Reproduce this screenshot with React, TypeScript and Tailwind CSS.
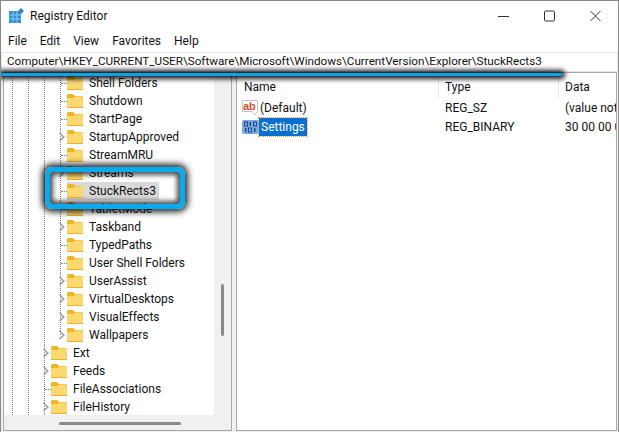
import React from "react";

const Folder = () => (
  <svg width="16" height="14" viewBox="0 0 16 14" className="shrink-0">
    <path d="M0 1.5 Q0 0 1.5 0 H6 L8 2 H16 V13 H0 Z" fill="#f0b429" />
    <path d="M0 4 H6.5 L8.5 2.6 H16 V13 Q16 14 15 14 H1 Q0 14 0 13 Z" fill="#fbd970" />
    <path d="M0 13.5 H16" stroke="#eeb02c" strokeWidth="1" />
  </svg>
);

const Chevron = () => (
  <svg width="8" height="10" viewBox="0 0 8 10" className="shrink-0">
    <path d="M1.5 1 L5.8 5 L1.5 9" fill="none" stroke="#a0a0a0" strokeWidth="1.6" />
  </svg>
);

type Row = { name: string; chevron?: boolean; deep: boolean; selected?: boolean };

const rows: Row[] = [
  { name: "Shell Folders", deep: true },
  { name: "Shutdown", deep: true },
  { name: "StartPage", deep: true },
  { name: "StartupApproved", chevron: true, deep: true },
  { name: "StreamMRU", deep: true },
  { name: "Streams", chevron: true, deep: true },
  { name: "StuckRects3", deep: true, selected: true },
  { name: "TabletMode", deep: true },
  { name: "Taskband", chevron: true, deep: true },
  { name: "TypedPaths", deep: true },
  { name: "User Shell Folders", deep: true },
  { name: "UserAssist", chevron: true, deep: true },
  { name: "VirtualDesktops", chevron: true, deep: true },
  { name: "VisualEffects", chevron: true, deep: true },
  { name: "Wallpapers", chevron: true, deep: true },
  { name: "Ext", chevron: true, deep: false },
  { name: "Feeds", chevron: true, deep: false },
  { name: "FileAssociations", deep: false },
  { name: "FileHistory", chevron: true, deep: false },
];

const Guide = ({ className }: { className: string }) => (
  <div className={`absolute top-0 w-px border-l border-dotted border-[#777] ${className}`} />
);

const TreeRow = ({ r }: { r: Row }) => (
  <div className={`flex h-[18px] items-center ${r.deep ? "pl-[54px]" : "pl-[38px]"}`}>
    <div className="flex h-[18px] w-[9px] items-center shrink-0">
      {r.chevron ? <Chevron /> : <div className="ml-[3px] w-[6px] border-t border-dotted border-[#777]" />}
    </div>
    <div className={`flex h-[18px] items-center pr-[3px] ${r.selected ? "bg-[#d9d9d9]" : ""}`}>
      <Folder />
      <span className="ml-[6px] text-[12px] leading-[18px] whitespace-nowrap text-[#111]">{r.name}</span>
    </div>
  </div>
);

const AbIcon = () => (
  <svg width="16" height="16" viewBox="0 0 16 16" className="shrink-0">
    <path d="M0.5 0.5 H15.5 V11.5 L13 15 L10 11.5 H0.5 Z" fill="#fff" stroke="#c4c4c4" />
    <text x="1" y="10" fontSize="11" fontWeight="700" fill="#d8502a" fontFamily="Liberation Sans, sans-serif">ab</text>
  </svg>
);

const BinIcon = () => (
  <svg width="17" height="16" viewBox="0 0 17 16" className="shrink-0">
    <rect x="0" y="1" width="17" height="14" rx="2" fill="#79a9de" />
    <rect x="2.5" y="3" width="3" height="4" fill="none" stroke="#1f4f8a" />
    <rect x="7.5" y="3" width="1.5" height="4" fill="#1f4f8a" />
    <rect x="11.5" y="3" width="3" height="4" fill="none" stroke="#1f4f8a" />
    <rect x="3" y="9" width="1.5" height="4" fill="#1f4f8a" />
    <rect x="6.5" y="9" width="3" height="4" fill="none" stroke="#1f4f8a" />
    <rect x="12" y="9" width="1.5" height="4" fill="#1f4f8a" />
  </svg>
);

export default function App() {
  return (
    <div
      className="relative flex h-[432px] w-[619px] flex-col overflow-hidden border-t border-l border-r border-[#8a8a8a] bg-white text-[#111]"
      style={{ fontFamily: 'Roboto, "Noto Sans", sans-serif' }}
    >
      {/* Title bar */}
      <div className="flex h-[29px] items-center pl-[8px]">
        <svg width="15" height="15" viewBox="0 0 15 15" className="shrink-0">
          <rect x="0" y="3" width="12" height="12" fill="#2f8fd6" />
          <path d="M4 3 V15 M8 3 V15 M0 7 H12 M0 11 H12" stroke="#9fd4f4" strokeWidth="0.8" />
          <path d="M12 0 L15 3 L12 6 L9 3 Z" fill="#2a86c8" />
        </svg>
        <span className="ml-[6px] text-[12px]">Registry Editor</span>
        <div className="ml-auto flex items-center gap-[35px] pr-[17px] text-[#222]">
          <svg width="11" height="12" viewBox="0 0 11 12"><path d="M0 6.5 H11" stroke="#333" /></svg>
          <svg width="11" height="12" viewBox="0 0 11 12"><rect x="0.5" y="1" width="10" height="10" rx="1" fill="none" stroke="#333" /></svg>
          <svg width="11" height="12" viewBox="0 0 11 12"><path d="M0.5 1 L10.5 11 M10.5 1 L0.5 11" stroke="#333" /></svg>
        </div>
      </div>
      {/* Menu */}
      <div className="flex h-[22px] items-center gap-[13px] pl-[7px] text-[12px]">
        <span>File</span>
        <span>Edit</span>
        <span>View</span>
        <span>Favorites</span>
        <span>Help</span>
      </div>
      {/* Address */}
      <div className="flex h-[20px] items-center border border-[#e6e6e6] pl-[5px] text-[11.7px]">
        <span className="whitespace-nowrap">Computer\HKEY_CURRENT_USER\Software\Microsoft\Windows\CurrentVersion\Explorer\StuckRects3</span>
      </div>
      {/* Panels */}
      <div className="flex min-h-0 flex-1 gap-[4px] bg-[#f0f0f0] pl-[2px] pr-[1px] pb-[1px]">
        <div className="relative flex w-[229px] flex-col overflow-hidden border border-[#a8a8a8] bg-white">
          <div className="flex min-h-0 flex-1">
            <div className="relative min-h-0 flex-1 overflow-hidden pt-[1px]">
              <Guide className="left-[8px] h-full" />
              <Guide className="left-[24px] h-full" />
              <Guide className="left-[40px] h-full" />
              <Guide className="left-[56px] h-[262px]" />
              <div className="relative">
                {rows.map((r) => <TreeRow key={r.name} r={r} />)}
              </div>
            </div>
            <div className="relative w-[17px] shrink-0 bg-[#f0f0f0]">
              <div className="absolute left-[7px] top-[211px] h-[52px] w-[3px] rounded bg-[#8a8a8a]" />
            </div>
          </div>
          <div className="relative h-[15px] shrink-0 bg-[#f0f0f0]">
            <div className="absolute left-[55px] top-[7px] h-[3px] w-[122px] rounded bg-[#8a8a8a]" />
          </div>
        </div>
        <div className="flex min-w-0 flex-1 flex-col overflow-hidden border border-[#a8a8a8] bg-white text-[12px]">
          <div className="flex h-[25px] shrink-0 items-center">
            <div className="h-full w-[202px] shrink-0 border-r border-[#e6e6e6] pl-[7px] leading-[28px]">Name</div>
            <div className="h-full w-[120px] shrink-0 border-r border-[#e6e6e6] pl-[6px] leading-[28px]">Type</div>
            <div className="h-full flex-1 pl-[6px] leading-[28px]">Data</div>
          </div>
          <div className="flex h-[19px] items-center whitespace-nowrap">
            <div className="flex w-[202px] shrink-0 items-center pl-[5px]"><AbIcon /><span className="ml-[2px]">(Default)</span></div>
            <div className="w-[120px] shrink-0 pl-[6px]">REG_SZ</div>
            <div className="pl-[6px]">(value not set)</div>
          </div>
          <div className="flex h-[19px] items-center whitespace-nowrap">
            <div className="flex w-[202px] shrink-0 items-center pl-[5px]"><BinIcon /><span className="bg-[#0a6fd0] px-[2px] leading-[18px] text-white outline-1 outline-dotted outline-[#e8a050]">Settings</span></div>
            <div className="w-[120px] shrink-0 pl-[6px]">REG_BINARY</div>
            <div className="pl-[6px]">30 00 00 00</div>
          </div>
        </div>
      </div>
      {/* Annotations */}
      <div className="absolute left-0 top-[72px] h-[3px] w-[561px] rounded-full bg-[#08a4e8] shadow-[0_0_5px_3px_rgba(0,0,0,0.9)]" />
      <div className="absolute left-[44px] top-[166px] h-[42px] w-[140px] rounded-[7px] border-[5px] border-[#08aaf0] shadow-[0_0_6px_3px_rgba(0,0,0,0.85),inset_0_0_5px_3px_rgba(0,0,0,0.7)]" />
    </div>
  );
}
